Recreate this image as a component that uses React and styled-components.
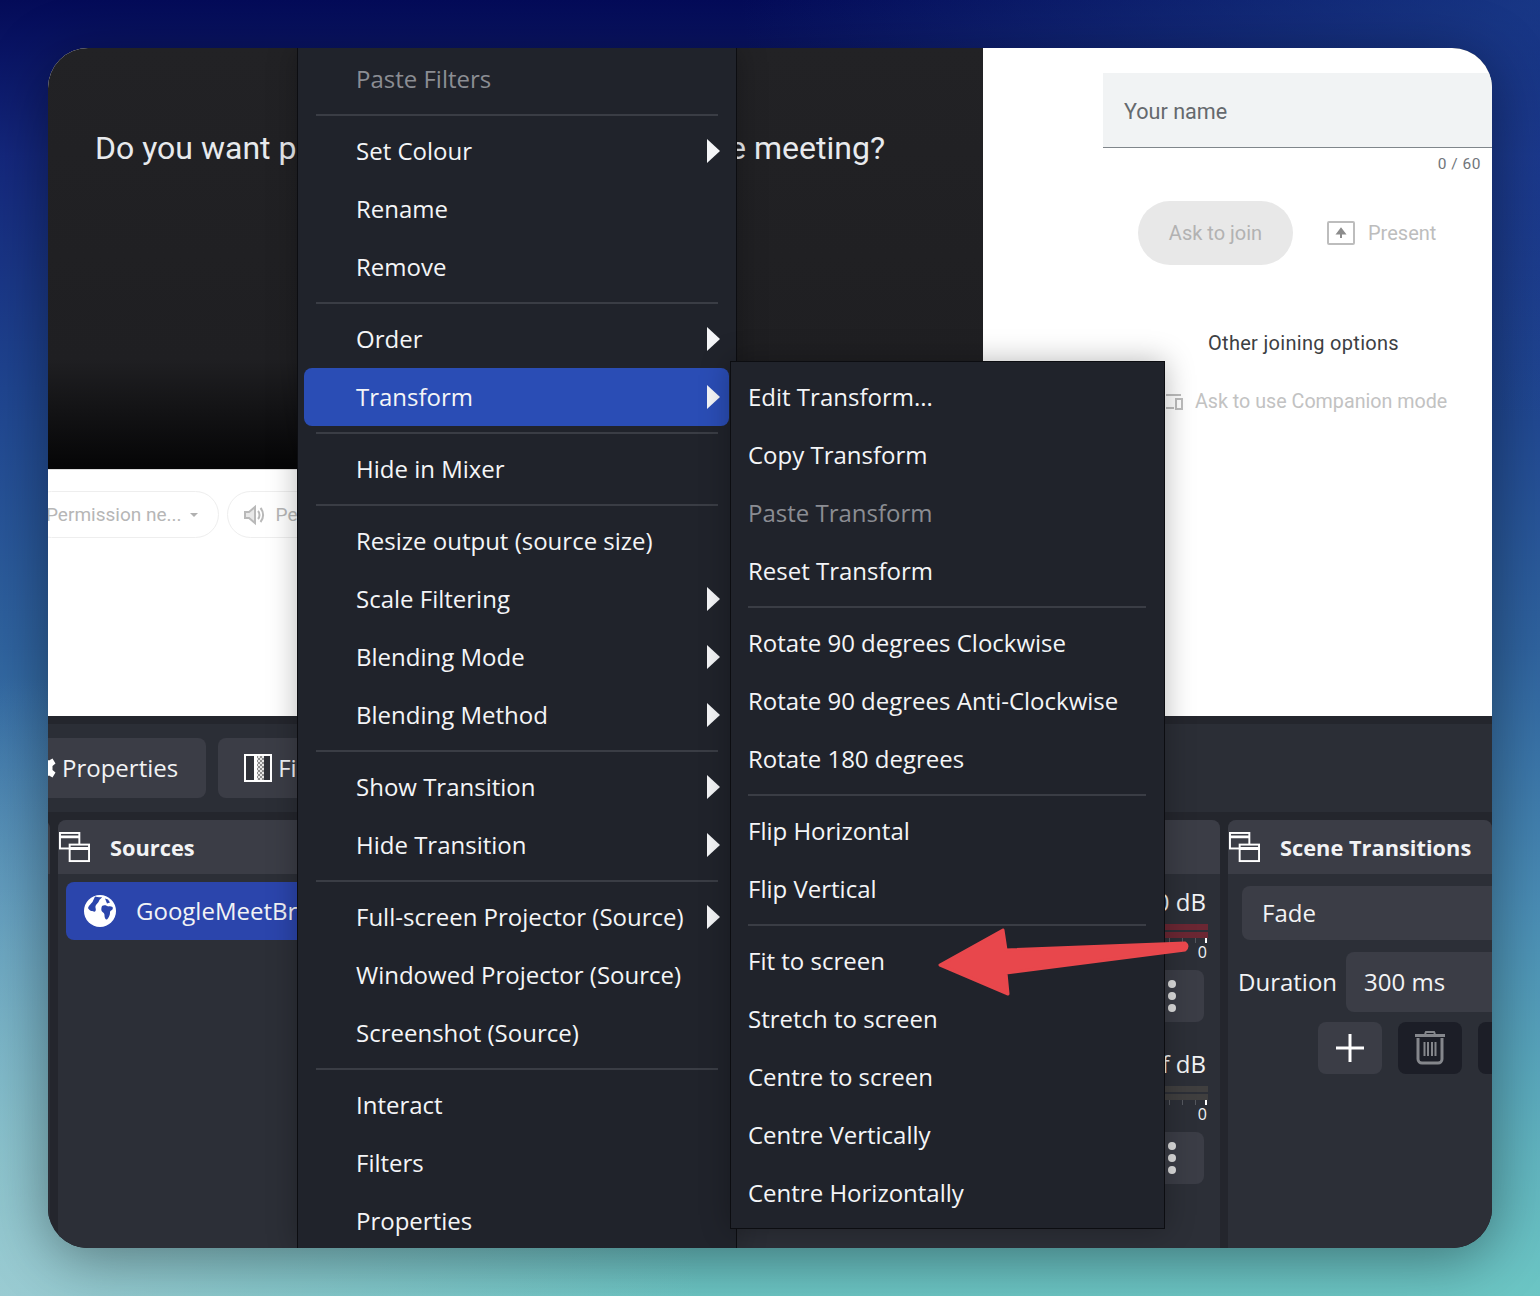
import React from "react";
import styled, { createGlobalStyle } from "styled-components";

const Global = createGlobalStyle`
  html, body { margin: 0; padding: 0; }
  body { font-family: "Open Sans", "Noto Sans", sans-serif; }
`;

const Page = styled.div`
  box-sizing: border-box;
  width: 1540px;
  height: 1296px;
  padding: 48px;
  overflow: hidden;
  background:
    radial-gradient(ellipse 700px 620px at 0% 100%, rgba(170, 205, 215, 0.75), rgba(170, 205, 215, 0) 100%),
    radial-gradient(ellipse 800px 420px at 100% 0%, rgba(40, 90, 170, 0.55), rgba(40, 90, 170, 0) 100%),
    linear-gradient(180deg, #040b58 0%, #14277c 12%, #1f4590 30%, #2f639f 50%, #4a8db5 70%, #62b6c0 90%, #6cc6c4 100%);
`;

const Window = styled.main`
  position: relative;
  width: 1444px;
  height: 1200px;
  border-radius: 40px;
  overflow: hidden;
  display: flex;
  flex-direction: column;
  background: #2b2e36;
  box-shadow: 0 10px 60px rgba(0, 0, 0, 0.4);
`;

const Preview = styled.section`
  height: 668px;
  flex: none;
  display: flex;
  background: #fff;
  overflow: hidden;
`;

const MeetLeft = styled.div`
  width: 935px;
  flex: none;
  display: flex;
  flex-direction: column;
  overflow: hidden;
`;

const Stage = styled.div`
  height: 422px;
  flex: none;
  box-sizing: border-box;
  padding: 79px 0 0 47px;
  background: linear-gradient(180deg, #222225 0%, #1f1f22 74%, #060607 99%);
  border-bottom: 1px solid #ddd;
`;

const Question = styled.h2`
  margin: 0;
  font-family: "Roboto", sans-serif;
  font-size: 32px;
  line-height: 42px;
  font-weight: 400;
  white-space: nowrap;
  color: #e8eaed;
`;

const Chips = styled.div`
  display: flex;
  gap: 8px;
  margin: 21px 0 0 -20px;
`;

const Chip = styled.div`
  display: flex;
  align-items: center;
  gap: ${(p) => p.$gap};
  height: 47px;
  flex: none;
  box-sizing: border-box;
  padding: 0 20px 0 ${(p) => p.$left};
  border: 1px solid #eeeeee;
  border-radius: 24px;
  font-family: "Roboto", sans-serif;
  font-size: 19px;
  color: #b6b6b6;
  white-space: nowrap;
`;

const Caret = styled.span`
  width: 0;
  height: 0;
  border-left: 4px solid transparent;
  border-right: 4px solid transparent;
  border-top: 4px solid #b0b0b0;
`;

const MeetRight = styled.div`
  flex: 1;
  min-width: 0;
  display: flex;
  flex-direction: column;
  font-family: "Roboto", sans-serif;
`;

const NameField = styled.div`
  margin: 25px 0 0 120px;
  height: 75px;
  box-sizing: border-box;
  display: flex;
  align-items: center;
  padding: 3px 0 0 21px;
  background: #f1f3f4;
  border-bottom: 1px solid #80868b;
  font-size: 21.6px;
  color: #65696d;
`;

const Counter = styled.div`
  align-self: flex-end;
  margin: 6px 11px 0 0;
  font-size: 15.5px;
  line-height: 20px;
  letter-spacing: 0.5px;
  color: #70757a;
`;

const JoinRow = styled.div`
  display: flex;
  align-items: center;
  margin: 27px 0 0 155px;
`;

const JoinButton = styled.div`
  width: 155px;
  height: 64px;
  border-radius: 32px;
  display: flex;
  align-items: center;
  justify-content: center;
  background: #e8e8e8;
  font-size: 20px;
  color: #b2b2b2;
`;

const PresentLabel = styled.div`
  display: flex;
  align-items: center;
  gap: 13px;
  margin-left: 34px;
  font-size: 20px;
  color: #bdbdbd;
`;

const OtherOptions = styled.div`
  margin: 64px 0 0 225px;
  font-size: 20px;
  line-height: 28px;
  letter-spacing: 0.3px;
  color: #3c4043;
`;

const Companion = styled.div`
  display: flex;
  align-items: center;
  gap: 11px;
  margin: 31px 0 0 181px;
  font-size: 19.7px;
  line-height: 28px;
  color: #c2c2c2;
  white-space: nowrap;
`;

const Dock = styled.section`
  flex: 1;
  display: flex;
  flex-direction: column;
  min-height: 0;
  background: #24262d;
  padding-top: 8px;
  color: #f2f3f5;
`;

const Toolbar = styled.div`
  height: 88px;
  flex: none;
  display: flex;
  align-items: center;
  gap: 12px;
  background: #2b2e36;
  overflow: hidden;
`;

const ToolButton = styled.div`
  height: 60px;
  flex: none;
  display: flex;
  align-items: center;
  gap: 6px;
  box-sizing: border-box;
  padding: ${(p) => p.$pad};
  margin-left: ${(p) => p.$offset || 0};
  border-radius: 8px;
  background: #3b3d46;
  font-size: 24px;
  white-space: nowrap;
`;

const ToolLabel = styled.span`
  padding-bottom: 2px;
`;

const Panels = styled.div`
  flex: 1;
  min-height: 0;
  display: flex;
  gap: 8px;
  margin-top: 8px;
`;

const Panel = styled.div`
  flex: ${(p) => (p.$width ? "none" : "1")};
  width: ${(p) => p.$width || "auto"};
  margin-left: ${(p) => p.$offset || 0};
  min-width: 0;
  display: flex;
  flex-direction: column;
  background: #2c2f37;
  border-radius: 8px 8px 0 0;
  overflow: hidden;
`;

const PanelHeader = styled.header`
  height: 54px;
  flex: none;
  display: flex;
  align-items: center;
  gap: 20px;
  padding-left: 1px;
  background: #3b3d46;
  font-size: 21.8px;
  font-weight: 700;
  white-space: nowrap;
`;

const SourcesBody = styled.div`
  padding: 8px 8px 0;
`;

const SourceItem = styled.div`
  height: 58px;
  display: flex;
  align-items: center;
  gap: 20px;
  padding-left: 18px;
  border-radius: 8px;
  background: #2b45ac;
  font-size: 24px;
  white-space: nowrap;
`;

const SourceName = styled.span`
  padding-bottom: 2px;
`;

const MixerBody = styled.div`
  display: flex;
  flex-direction: column;
  padding: 12px 16px 0 0;
  gap: 26px;
`;

const Track = styled.div`
  display: flex;
  flex-direction: column;
  align-items: flex-end;
`;

const DbLabel = styled.div`
  font-size: 24px;
  line-height: 32px;
  margin-right: -2px;
`;

const MeterBar = styled.div`
  width: 200px;
  height: 6px;
  margin: ${(p) => p.$gap} -4px 0 0;
  background: ${(p) => p.$color};
`;

const Ticks = styled.div`
  width: 200px;
  height: 5px;
  margin-right: -4px;
  position: relative;
  background: repeating-linear-gradient(270deg, transparent 0 12px, #55585f 12px 13px);
  &::after {
    content: "";
    position: absolute;
    right: 1px;
    top: 0;
    width: 2px;
    height: 5px;
    background: #fff;
  }
`;

const TickZero = styled.div`
  font-size: 16px;
  line-height: 18px;
  margin: 0 -3px 9px 0;
`;

const DotsButton = styled.div`
  width: 200px;
  height: 52px;
  display: flex;
  flex-direction: column;
  align-items: flex-end;
  justify-content: center;
  gap: 4px;
  padding-right: 28px;
  box-sizing: border-box;
  border-radius: 8px;
  background: #3b3d46;
`;

const Dot = styled.span`
  width: 8px;
  height: 8px;
  border-radius: 50%;
  background: #dddddd;
`;

const TransitionBody = styled.div`
  display: flex;
  flex-direction: column;
  padding: 12px 0 0 10px;
  font-size: 24px;
`;

const SelectBox = styled.div`
  height: 54px;
  box-sizing: border-box;
  margin-left: 4px;
  display: flex;
  align-items: center;
  padding: 0 0 2px 20px;
  border-radius: 8px 0 0 8px;
  background: #3b3d46;
`;

const DurationRow = styled.div`
  display: flex;
  align-items: center;
  gap: 9px;
  margin-top: 12px;
`;

const DurationLabel = styled.span`
  padding-bottom: 2px;
`;

const SpinBox = styled.div`
  flex: 1;
  height: 60px;
  box-sizing: border-box;
  display: flex;
  align-items: center;
  padding: 0 0 2px 18px;
  border-radius: 8px 0 0 8px;
  background: #3b3d46;
`;

const ActionRow = styled.div`
  display: flex;
  gap: 16px;
  margin: 10px 0 0 80px;
`;

const ActionButton = styled.div`
  width: 64px;
  height: 52px;
  flex: none;
  display: flex;
  align-items: center;
  justify-content: center;
  border-radius: 8px;
  background: ${(p) => (p.$dark ? "#1c1e27" : "#3b3d46")};
`;

const Menu = styled.nav`
  position: absolute;
  left: ${(p) => p.$left}px;
  top: ${(p) => p.$top}px;
  width: ${(p) => p.$width}px;
  height: ${(p) => p.$height}px;
  box-sizing: border-box;
  padding: ${(p) => p.$pad}px 7px 0 6px;
  background: #20232b;
  border: 1px solid #0c0d11;
  border-width: ${(p) => p.$borders};
  box-shadow: 0 0 28px rgba(0, 0, 0, 0.28);
  overflow: hidden;
`;

const Row = styled.div`
  position: relative;
  height: 58px;
  box-sizing: border-box;
  display: flex;
  align-items: center;
  padding: 0 0 2px ${(p) => p.$inset}px;
  border-radius: 8px;
  font-size: 24px;
  white-space: nowrap;
  color: ${(p) => (p.$disabled ? "#8b8d93" : "#f4f5f7")};
  background: ${(p) => (p.$active ? "#2a4db5" : "transparent")};
`;

const Arrow = styled.span`
  position: absolute;
  right: 9px;
  top: 17px;
  width: 13px;
  height: 24px;
  background: #f4f5f7;
  clip-path: polygon(0 0, 100% 50%, 0 100%);
`;

const Separator = styled.div`
  height: 2px;
  margin: 6px 11px 6px ${(p) => p.$side}px;
  background: #3a3d45;
`;

const Annotation = styled.svg`
  position: absolute;
  left: 832px;
  top: 822px;
`;

const WindowsIcon = () => (
  <svg width="31" height="31" viewBox="0 0 32 32" fill="none" stroke="#fff" strokeWidth="2">
    <rect x="1" y="1" width="20" height="16" fill="#3b3d46" />
    <path d="M1 5h20" strokeWidth="3" />
    <rect x="11" y="13" width="20" height="17" fill="#3b3d46" />
    <path d="M11 17h20" strokeWidth="3" />
  </svg>
);

const Globe = () => (
  <svg width="32" height="32" viewBox="0 0 32 32">
    <circle cx="16" cy="16" r="16" fill="#fff" />
    <path d="M11 1.500c3 1 5 .8 7 .5-1 2-2.500 2-3 4-.5 2-3 3-3.500 5-.5 2 1 3 0 5-1 1.500-2.500 0-4 0-1 0-3-1.500-3.500-3 1-3 3-4 4.500-6 1-2 1.500-3.500 2.500-5.500z" fill="#2b45ac" />
    <path d="M18 11c2-1.500 5-.5 6 .5 1.500-.5 3-.5 4.500.5.500 1 .5 2-.5 3-1.500.5-2 1-2 3s-1.500 5-3 6.500c-1.500.5-2.500-2-2.500-4 0-2-.5-2.500-2-3.500-1.500-1-1.500-4-.5-6z" fill="#2b45ac" />
    <path d="M21 3.500l3 1 2 3-3 1z" fill="#2b45ac" />
  </svg>
);

const Cog = () => (
  <svg width="28" height="28" viewBox="0 0 28 28">
    <path fill="#fff" d="M11 1h6l1 4 3 1.500 3.500-2 3 5-3 2.500v4l3 2.500-3 5-3.500-2L18 23l-1 4h-6l-1-4-3-1.500-3.500 2-3-5 3-2.500v-4l-3-2.500 3-5 3.500 2L10 5z" />
    <circle cx="14" cy="14" r="4" fill="#3b3d46" />
  </svg>
);

const FilterIcon = () => (
  <svg width="28" height="28" viewBox="0 0 28 28">
    <defs>
      <pattern id="dither" width="4" height="4" patternUnits="userSpaceOnUse">
        <rect width="4" height="4" fill="#8d8d8d" />
        <rect width="2" height="2" fill="#e6e6e6" />
        <rect x="2" y="2" width="2" height="2" fill="#e6e6e6" />
      </pattern>
    </defs>
    <rect x="1" y="1" width="26" height="26" fill="#2f3138" stroke="#fff" strokeWidth="2" />
    <rect x="10" y="2" width="10" height="24" fill="url(#dither)" />
    <rect x="10" y="2" width="3" height="24" fill="#fff" />
  </svg>
);

const Speaker = () => (
  <svg width="22" height="22" viewBox="0 0 22 22" fill="none" stroke="#b9b9b9" strokeWidth="2">
    <path d="M2 8v6h4l6 5V3L6 8z" fill="#e8e8e8" />
    <path d="M15 7c2 2 2 6 0 8M17.500 4c3.500 4 3.500 10 0 14" />
  </svg>
);

const PresentIcon = () => (
  <svg width="28" height="24" viewBox="0 0 28 24" fill="none">
    <rect x="1" y="1" width="26" height="22" rx="1" stroke="#bdbdbd" strokeWidth="2" />
    <path d="M14 17v-6M10.500 12.500L14 8l3.500 4.500z" stroke="#8c8c8c" strokeWidth="2" fill="#8c8c8c" />
  </svg>
);

const CompanionIcon = () => (
  <svg width="20" height="20" viewBox="0 0 20 20" fill="none" stroke="#bdbdbd" strokeWidth="2">
    <path d="M2 3h15M2 16h8" />
    <rect x="12" y="7" width="6" height="10" />
  </svg>
);

const Plus = () => (
  <svg width="30" height="30" viewBox="0 0 30 30">
    <path d="M13.500 1h3v12.500H29v3H16.500V29h-3V16.500H1v-3h12.500z" fill="#fff" />
  </svg>
);

const Trash = () => (
  <svg width="32" height="34" viewBox="0 0 32 34" fill="none" stroke="#85878c">
    <path d="M1 4.500h30" strokeWidth="3" />
    <path d="M11 3l1-2h8l1 2" strokeWidth="2" />
    <path d="M4 7v21a4 4 0 0 0 4 4h16a4 4 0 0 0 4-4V7" strokeWidth="3" />
    <path d="M10.500 11v14M14 11v14M18 11v14M21.500 11v14" strokeWidth="2" />
  </svg>
);

const mainMenu = [
  { t: "Paste Filters", d: true },
  "-",
  { t: "Set Colour", s: true },
  { t: "Rename" },
  { t: "Remove" },
  "-",
  { t: "Order", s: true },
  { t: "Transform", s: true, a: true },
  "-",
  { t: "Hide in Mixer" },
  "-",
  { t: "Resize output (source size)" },
  { t: "Scale Filtering", s: true },
  { t: "Blending Mode", s: true },
  { t: "Blending Method", s: true },
  "-",
  { t: "Show Transition", s: true },
  { t: "Hide Transition", s: true },
  "-",
  { t: "Full-screen Projector (Source)", s: true },
  { t: "Windowed Projector (Source)" },
  { t: "Screenshot (Source)" },
  "-",
  { t: "Interact" },
  { t: "Filters" },
  { t: "Properties" },
];

const subMenu = [
  { t: "Edit Transform..." },
  { t: "Copy Transform" },
  { t: "Paste Transform", d: true },
  { t: "Reset Transform" },
  "-",
  { t: "Rotate 90 degrees Clockwise" },
  { t: "Rotate 90 degrees Anti-Clockwise" },
  { t: "Rotate 180 degrees" },
  "-",
  { t: "Flip Horizontal" },
  { t: "Flip Vertical" },
  "-",
  { t: "Fit to screen" },
  { t: "Stretch to screen" },
  { t: "Centre to screen" },
  { t: "Centre Vertically" },
  { t: "Centre Horizontally" },
];

const MenuItems = ({ items, inset, side }) =>
  items.map((item, i) =>
    item === "-" ? (
      <Separator key={i} $side={side} />
    ) : (
      <Row key={i} $inset={inset} $disabled={item.d} $active={item.a}>
        {item.t}
        {item.s && <Arrow />}
      </Row>
    )
  );

const MixerTrack = ({ label, color }) => (
  <Track>
    <DbLabel>{label}</DbLabel>
    <MeterBar $gap="6px" $color={color} />
    <MeterBar $gap="2px" $color={color} />
    <Ticks />
    <TickZero>0</TickZero>
    <DotsButton>
      <Dot />
      <Dot />
      <Dot />
    </DotsButton>
  </Track>
);

export default function App() {
  return (
    <Page>
      <Global />
      <Window>
        <Preview>
          <MeetLeft>
            <Stage>
              <Question>Do you want people to see and hear you in the meeting?</Question>
            </Stage>
            <Chips>
              <Chip $left="17px" $gap="8px">
                Permission ne...
                <Caret />
              </Chip>
              <Chip $left="15px" $gap="11px">
                <Speaker />
                Permission needed
              </Chip>
            </Chips>
          </MeetLeft>
          <MeetRight>
            <NameField>Your name</NameField>
            <Counter>0 / 60</Counter>
            <JoinRow>
              <JoinButton>Ask to join</JoinButton>
              <PresentLabel>
                <PresentIcon />
                Present
              </PresentLabel>
            </JoinRow>
            <OtherOptions>Other joining options</OtherOptions>
            <Companion>
              <CompanionIcon />
              Ask to use Companion mode
            </Companion>
          </MeetRight>
        </Preview>
        <Dock>
          <Toolbar>
            <ToolButton $pad="0 28px 0 0" $offset="-20px">
              <Cog />
              <ToolLabel>Properties</ToolLabel>
            </ToolButton>
            <ToolButton $pad="0 28px 0 26px">
              <FilterIcon />
              <ToolLabel>Filters</ToolLabel>
            </ToolButton>
          </Toolbar>
          <Panels>
            <Panel $width="240px" $offset="-238px">
              <PanelHeader />
            </Panel>
            <Panel $width="640px">
              <PanelHeader>
                <WindowsIcon />
                Sources
              </PanelHeader>
              <SourcesBody>
                <SourceItem>
                  <Globe />
                  <SourceName>GoogleMeetBridge</SourceName>
                </SourceItem>
              </SourcesBody>
            </Panel>
            <Panel $width="514px">
              <PanelHeader />
              <MixerBody>
                <MixerTrack label="0.0 dB" color="#6b2733" />
                <MixerTrack label="-inf dB" color="#403f3f" />
              </MixerBody>
            </Panel>
            <Panel>
              <PanelHeader>
                <WindowsIcon />
                Scene Transitions
              </PanelHeader>
              <TransitionBody>
                <SelectBox>Fade</SelectBox>
                <DurationRow>
                  <DurationLabel>Duration</DurationLabel>
                  <SpinBox>300 ms</SpinBox>
                </DurationRow>
                <ActionRow>
                  <ActionButton>
                    <Plus />
                  </ActionButton>
                  <ActionButton $dark>
                    <Trash />
                  </ActionButton>
                  <ActionButton $dark />
                </ActionRow>
              </TransitionBody>
            </Panel>
          </Panels>
        </Dock>
        <Menu $left={249} $top={0} $width={440} $height={1200} $pad={2} $borders="0 1px">
          <MenuItems items={mainMenu} inset={52} side={12} />
        </Menu>
        <Menu $left={682} $top={313} $width={435} $height={868} $pad={6} $borders="1px">
          <MenuItems items={subMenu} inset={11} side={11} />
        </Menu>
        <Annotation width="320" height="140" viewBox="0 0 320 140">
          <path
            d="M305 73 L126 80 L123 60 L60 95 L128 124 L126 103 L305 80 Q309 76 305 73 Z"
            fill="#e8474c"
            stroke="#e8474c"
            strokeWidth="3"
            strokeLinejoin="round"
          />
        </Annotation>
      </Window>
    </Page>
  );
}
